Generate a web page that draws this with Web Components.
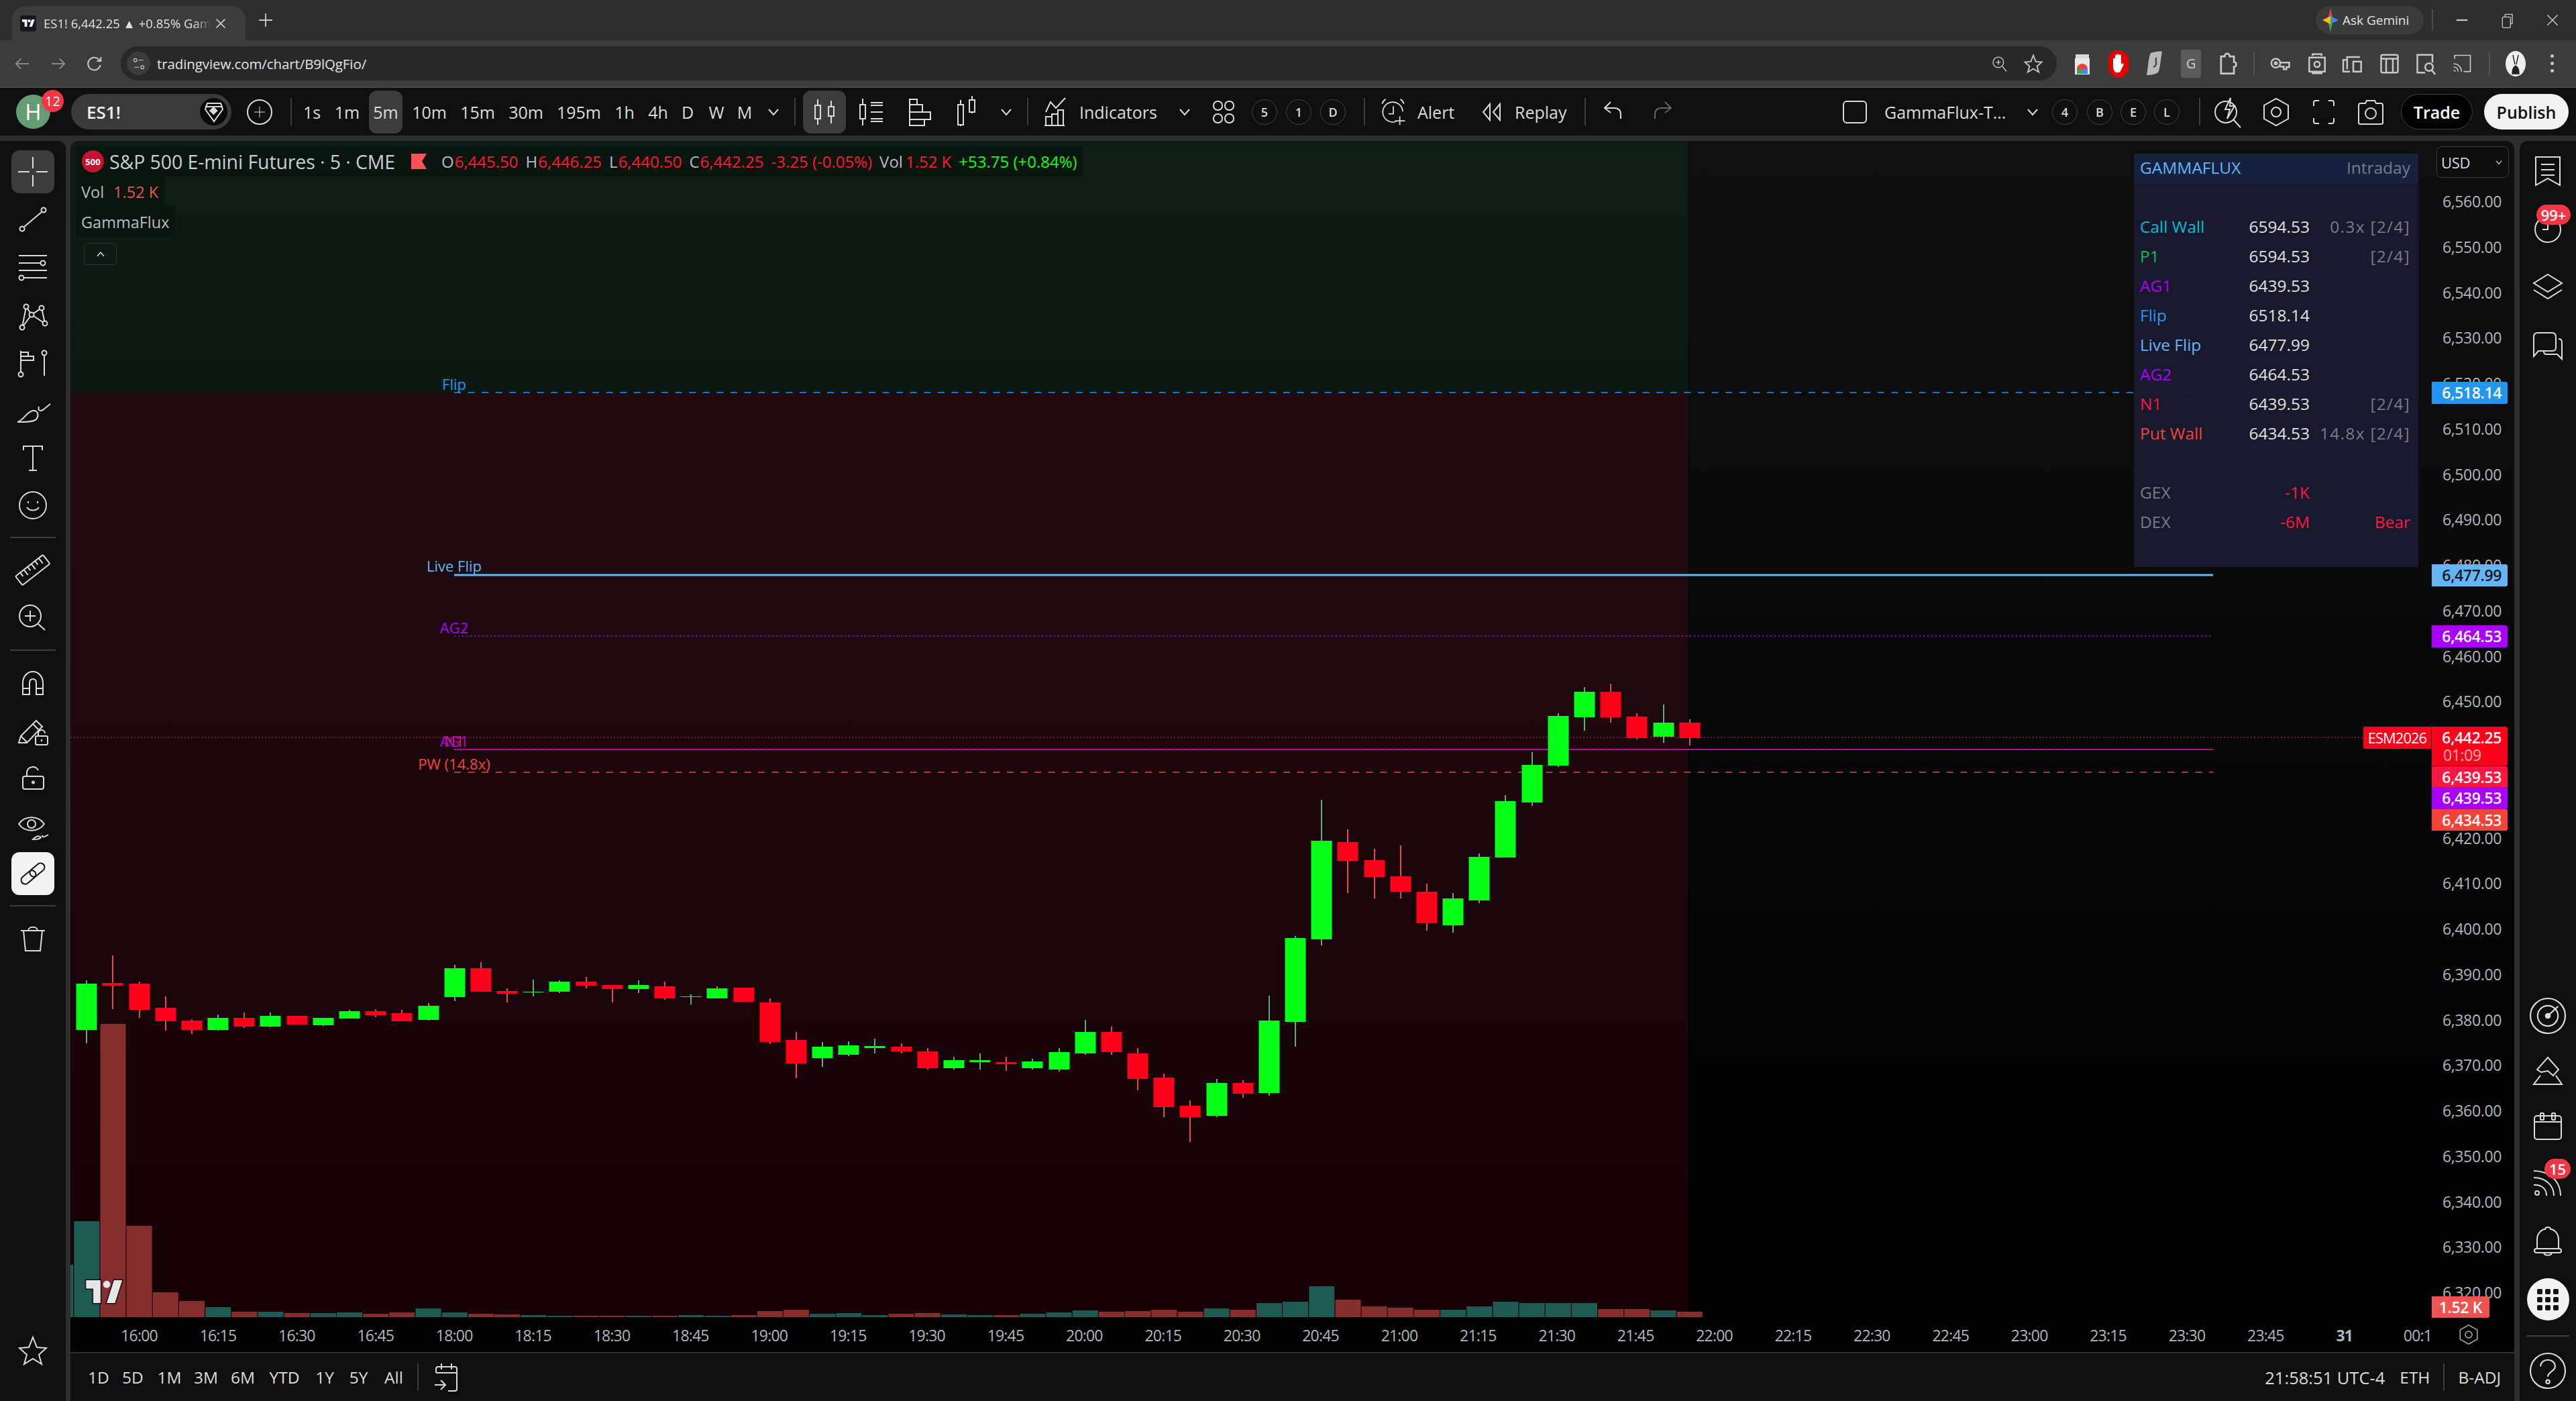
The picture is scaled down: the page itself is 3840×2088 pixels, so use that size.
<!DOCTYPE html>
<html lang="en">
<head>
<meta charset="utf-8">
<title>ES1! 6,442.25 GammaFlux</title>
<style>
  html, body { margin: 0; height: 100%; overflow: hidden; background: #2e2e2e; }
  body { width: 3840px; height: 2088px; display: flex; flex-direction: column; font-family: "Open Sans", sans-serif; }
  .main { display: flex; height: 1878px; margin-top: 8px; }
  .center { width: 3643px; margin: 0 8px 0 7px; display: flex; flex-direction: column; }
</style>
</head>
<body>
<browser-chrome></browser-chrome>
<tv-topbar></tv-topbar>
<div class="main">
  <tv-leftbar></tv-leftbar>
  <div class="center">
    <tv-chart></tv-chart>
    <tv-bottombar></tv-bottombar>
  </div>
  <tv-rightbar></tv-rightbar>
</div>

<script>
const ICONS = {
  crosshair: '<path d="M2 24H19M29 24H46M24 2V19M24 29V46"/>',
  trend: '<path d="M11 35L37 13"/><circle cx="8" cy="38" r="3.5"/><circle cx="40" cy="10" r="3.5"/>',
  fibs: '<path d="M3 7H45M3 18H35M3 29H45M11 40H45"/><circle cx="39" cy="18" r="3.5"/><circle cx="7" cy="40" r="3.5"/>',
  pattern: '<path d="M8 43L14 12L22 24L37 14L42 37L22 24L8 43"/><g fill="#0f0f0f"><circle cx="8" cy="43" r="3.5"/><circle cx="14" cy="12" r="3.5"/><circle cx="22" cy="24" r="3.5"/><circle cx="37" cy="14" r="3.5"/><circle cx="42" cy="37" r="3.5"/></g>',
  flagpin: '<path d="M6 39V7M6 9H17V15H25V21H6"/><path d="M6 15H17"/><circle cx="6" cy="42" r="3.5"/><path d="M41 14V44"/><circle cx="41" cy="10" r="3.5"/>',
  brush: '<path d="M1 42C10 40 14 27 24 25C31 24 34 32 29 38C25 42 12 42 1 42Z"/><path d="M33 19C31 25 35 26 39 24L50 15"/>',
  text: '<path d="M10 13V7H38V13M24 7V43M18 43H30"/>',
  emoji: '<circle cx="24" cy="24" r="20"/><path d="M15 27C19 33 29 33 33 27"/><path d="M17 18V21M31 18V21"/>',
  ruler: '<g transform="rotate(-38 24 24)"><rect x="-2" y="15" width="52" height="17" rx="2"/><path d="M7 15V22M14 15V25M21 15V22M28 15V25M35 15V22M42 15V25"/></g>',
  zoom: '<circle cx="20" cy="21" r="16"/><path d="M20 13V29M12 21H28M32 33L42 42"/>',
  magnet: '<path d="M9 41V24C9 14 16 7 24 7C32 7 39 14 39 24V41H29V24C29 20 27 18 24 18C21 18 19 20 19 24V41Z"/><path d="M9 32H19M29 32H39"/>',
  pencillock: '<path d="M3 42L6 32L29 9L38 18L15 42Z"/><path d="M24 14L33 23M6 32L15 41"/><rect x="28" y="32" width="18" height="13" rx="2" fill="#0f0f0f"/><path d="M32 32V28A5 5 0 0 1 42 28"/><path d="M37 37V40"/>',
  lock: '<rect x="9" y="21" width="31" height="19" rx="3"/><path d="M15 21V15A9 9 0 0 1 32 12"/><circle cx="24.500" cy="30" r="1.500"/>',
  eye: '<path d="M3 21C12 8 32 8 41 21C32 34 12 34 3 21Z"/><circle cx="22" cy="21" r="6"/><path d="M24 44C28 39 33 38 36 41C34 44 30 44 24 44ZM38 38C38 41 41 41 47 37"/>',
  link: '<g transform="rotate(-40 24 24)"><rect x="3" y="18" width="25" height="12" rx="6"/><rect x="20" y="18" width="25" height="12" rx="6"/></g>',
  trash: '<path d="M6 12H42M10 12L13 42H35L38 12M17 12C17 5 31 5 31 12"/>',
  star: '<path d="M24 4L30 19L44 20L33 30L37 44L24 36L11 44L15 30L4 20L18 19Z"/>',
  candles: '<path d="M14 5V14M14 34V43M34 7V16M34 30V41"/><rect x="10" y="14" width="8" height="20"/><rect x="30" y="16" width="8" height="14"/>',
  candlelist: '<path d="M10 4V13M10 34V44"/><rect x="6" y="13" width="8" height="21"/><path d="M22 10H40M22 14H40M22 24H40M22 34H40M22 38H40" />',
  profile: '<path d="M8 5H19V13H8ZM8 13H27V24H8ZM8 24H39V35H8ZM8 35H30V44H8Z"/>',
  pairbars: '<path d="M13 6V13M13 43V45M30 0V6M30 24V26"/><rect x="9" y="13" width="8" height="30"/><rect x="26" y="6" width="8" height="18"/>',
  chevron: '<path d="M17 20L24 28L31 20"/>',
  indicators: '<path d="M8 24L15 9L23 18L37 3"/><path d="M8 44V31H17V44M17 44V27H26V44M26 44V21H34V44M6 44H36"/>',
  layouts: '<rect x="9" y="8" width="13" height="13" rx="6"/><rect x="26" y="8" width="13" height="13" rx="6"/><rect x="9" y="27" width="13" height="13" rx="6"/><rect x="26" y="27" width="13" height="13" rx="6"/>',
  alert: '<path d="M29 40A17 17 0 1 1 40 23"/><path d="M24 14V27H16M5 10C6 6 8 4 11 2M42 10C41 6 39 4 36 2M35 31V46M27 39H44"/>',
  replay: '<path d="M20 12L10 24L20 36ZM35 12L25 24L35 36Z"/>',
  undo: '<path d="M19 9L10 18L19 25M10 18H24C31 18 34 22 34 28V34"/>',
  redo: '<path d="M29 9L38 18L29 25M38 18H24C17 18 14 22 14 28V34"/>',
  square: '<rect x="7" y="8" width="34" height="32" rx="5"/>',
  bolt: '<circle cx="20" cy="24" r="16"/><path d="M31 35L42 47"/><path d="M27 3L19 20H26L22 34L33 15H26Z" fill="#0f0f0f"/>',
  hex: '<path d="M14 6H34L44 24L34 42H14L4 24Z" transform="rotate(90 24 24)"/><circle cx="24" cy="24" r="7"/>',
  fullscreen: '<path d="M9 15V10C9 8 10 7 12 7H17M31 7H36C38 7 39 8 39 10V15M39 33V38C39 40 38 41 36 41H31M17 41H12C10 41 9 40 9 38V33"/>',
  camera: '<path d="M6 14C6 12 7 11 9 11H16L18 7H30L32 11H39C41 11 42 12 42 14V40C42 41 41 42 39 42H9C7 42 6 41 6 40Z"/><circle cx="24" cy="26" r="8"/>',
  watchlist: '<path d="M6 3H42V45L24 35L6 45Z"/><path d="M14 14H34M14 22H34M14 30H34"/>',
  clock: '<path d="M14 10L9 14"/><circle cx="24" cy="26" r="19"/><path d="M24 16V26H16"/>',
  layers: '<path d="M24 6L45 19L24 32L3 19Z"/><path d="M3 29L24 42L45 29"/>',
  chat: '<path d="M3 40V11C3 7 5 5 9 5H30C34 5 36 7 36 11V27C36 31 34 32 30 32H10Z"/><path d="M40 14C43 14 45 16 45 19V44L38 37H22C19 37 18 36 18 33"/>',
  radar: '<circle cx="24" cy="24" r="24"/><circle cx="24" cy="24" r="14"/><circle cx="24" cy="24" r="3" fill="currentColor"/><path d="M24 24L38 11"/>',
  ideas: '<path d="M24 6L40 24L32 33L24 26L14 28L8 24Z"/><path d="M13 33L3 46H45L36 33"/>',
  calendar: '<rect x="4" y="9" width="40" height="35" rx="4"/><path d="M4 18H44"/><rect x="13" y="5" width="5" height="10" rx="1"/><rect x="30" y="5" width="5" height="10" rx="1"/>',
  feed: '<circle cx="8" cy="40" r="3"/><path d="M3 28C15 27 22 34 22 44M3 17C21 17 33 29 33 44M3 7C26 7 43 22 43 44"/>',
  bell: '<path d="M8 36V22C8 13 15 7 20 7C20 3 28 3 28 7C33 7 40 13 40 22V36"/><rect x="4" y="36" width="40" height="6" rx="3"/><path d="M18 42C19 47 29 47 30 42"/>',
  help: '<circle cx="24" cy="24" r="24"/><path d="M14 18C14 6 34 6 34 18C34 25 24 25 24 32"/><circle cx="24" cy="39" r="2.500"/>',
  rangecal: '<path d="M8 17V11C8 9 9 8 11 8H36C38 8 39 9 39 11V41C39 43 38 44 36 44H26M8 17H39M16 3V12M31 3V12M6 35H21M15 28L22 35L15 42"/>',
  back: '<path d="M40 24H9M21 12L9 24L21 36"/>',
  forward: '<path d="M8 24H39M27 12L39 24L27 36"/>',
  reload: '<path d="M37 27A14 14 0 1 1 33 14L38 18M38 9V18H29"/>',
  tune: '<circle cx="15" cy="15" r="4"/><path d="M23 15H35M13 33H25"/><circle cx="33" cy="33" r="4"/>',
  search: '<circle cx="21" cy="21" r="11"/><path d="M30 30L38 40M21 16V26M16 21H26"/>',
  plus: '<path d="M24 8V40M8 24H40"/>',
  close: '<path d="M13 13L35 35M35 13L13 35"/>',
  puzzle: '<path d="M14 12H20C20 6 28 6 28 12H35V21C40 21 40 29 35 29V40H14Z"/>',
  key: '<circle cx="15" cy="23" r="8"/><circle cx="15" cy="23" r="2"/><path d="M23 22H39V30H34V34H29V29H22"/>',
  lens: '<path d="M16 10V7H32V10M10 13H38V38H10ZM16 38V41H32V38"/><circle cx="24" cy="25" r="5"/>',
  devices: '<path d="M13 34V12H36M18 38H6V17H13M24 38V20H38V38Z"/>',
  sidepanel: '<rect x="9" y="8" width="30" height="32" rx="3"/><path d="M9 15H39M18 15V40M30 15V40"/>',
  docsearch: '<path d="M23 40H9V8H36V22"/><circle cx="30" cy="30" r="7"/><path d="M35 36L41 43"/>',
  cast: '<path d="M11 15V9H39V38H27M9 24C17 24 23 30 23 38M9 30C14 30 17 33 17 38M9 36C11 36 12 37 12 38"/>',
  minimize: '<path d="M13 24H35" stroke-width="3"/>',
  restore: '<rect x="14" y="17" width="18" height="24" rx="3"/><path d="M20 17V11H36V32H32"/>'
};

class TvIcon extends HTMLElement {
  constructor() {
    super();
    this.shadowDOM = this.attachShadow({mode: 'open'});
  }
  connectedCallback() {
    const size = this.getAttribute('size') || 48;
    this.shadowDOM.innerHTML = `
      <style>
        :host { display: inline-flex; align-items: center; justify-content: center; flex: none; color: inherit; }
        svg { display: block; overflow: visible; fill: none; stroke: currentColor; stroke-width: ${this.getAttribute('stroke') || 2}; }
      </style>
      <svg viewBox="0 0 48 48" width="${size}" height="${size}">${ICONS[this.getAttribute('name')] || ''}</svg>`;
  }
}
customElements.define('tv-icon', TvIcon);

class RoundBadge extends HTMLElement {
  constructor() {
    super();
    this.shadowDOM = this.attachShadow({mode: 'open'});
    this.shadowDOM.innerHTML = `
      <style>
        :host { display: flex; align-items: center; justify-content: center; position: absolute;
          background: #f23645; color: #fff; font: 600 23px "Open Sans", sans-serif; border-radius: 17px; }
      </style><slot></slot>`;
  }
}
customElements.define('round-badge', RoundBadge);

class BrowserChrome extends HTMLElement {
  constructor() {
    super();
    this.shadowDOM = this.attachShadow({mode: 'open'});
  }
  connectedCallback() {
    this.shadowDOM.innerHTML = `
      <style>
        :host { display: block; height: 131px; color: #c7c7c7; font-family: "Open Sans", sans-serif; }
        .strip { height: 60px; background: #2d2d2d; display: flex; }
        .tab { margin: 9px 0 0 18px; width: 348px; height: 51px; box-sizing: border-box; background: #3c3c3c; border-radius: 20px 20px 0 0;
          display: flex; align-items: center; padding: 0 0 0 12px; position: relative; }
        .fav { width: 24px; height: 24px; background: #131722; border-radius: 4px; display: flex; align-items: center; justify-content: center; flex: none; }
        .title { margin-left: 11px; width: 250px; white-space: nowrap; font-size: 18.500px; color: #e3e3e3;
          -webkit-mask-image: linear-gradient(90deg, #000 90%, transparent); mask-image: linear-gradient(90deg, #000 90%, transparent); }
        .newtab { margin: 12px 0 0 12px; width: 36px; height: 36px; }
        .win { margin-left: auto; display: flex; align-items: center; height: 60px; }
        .gem { width: 161px; height: 42px; margin-top: -1px; border-radius: 21px; background: #3b3b3b; display: flex; align-items: center; box-sizing: border-box;
          padding-left: 10px; gap: 6px; font-size: 19px; color: #e3e3e3; white-space: nowrap; }
        .wsep { width: 2px; height: 32px; background: #4a4a4a; margin: 0 0 0 12px; }
        .wbtn { margin-left: 19px; width: 48px; }
        .bar { height: 69px; background: #3c3c3c; border-bottom: 2px solid #484848; display: flex; align-items: center; padding-left: 6px; }
        .slot { width: 54px; }
        .dim { color: #8a8a8a; }
        .omni { width: 2886px; height: 51px; margin-left: 12px; border-radius: 26px; background: #282828; display: flex; align-items: center; box-sizing: border-box; padding-left: 9px; }
        .site { width: 35px; height: 35px; border-radius: 50%; background: #3c3c3c; display: flex; align-items: center; justify-content: center; }
        .url { margin-left: 10px; font-size: 20.500px; color: #e3e3e3; letter-spacing: -.1px; white-space: nowrap; }
        .ends { margin-left: auto; display: flex; align-items: center; padding-right: 10px; }
        .ends tv-icon { width: 50px; }
        .vsep { width: 2px; height: 34px; background: #555; flex: none; }
        .ext { margin-left: 11px; display: flex; align-items: center; }
        .sq { width: 54px; display: flex; justify-content: center; }
        .dots { display: flex; flex-direction: column; gap: 6px; width: 54px; align-items: center; }
        .dots i { width: 5px; height: 5px; border-radius: 50%; background: #c7c7c7; }
      </style>
      <div class="strip">
        <div class="tab">
          <div class="fav"><svg viewBox="0 0 36 28" width="19"><path fill="#fff" d="M14 24H7V11H0V4h14v20zM28 24h-8l7.500-20h8L28 24z"/><circle fill="#fff" cx="20" cy="8" r="4"/></svg></div>
          <div class="title">ES1! 6,442.25 ▲ +0.85% Gamm</div>
          <tv-icon name="close" size="28" stroke="3"></tv-icon>
        </div>
        <tv-icon class="newtab" name="plus" size="30" stroke="3"></tv-icon>
        <div class="win">
          <div class="gem">
            <svg viewBox="0 0 24 36" width="24" height="36"><path fill="#ea4335" d="M12 0L16 18H8Z"/><path fill="#4285f4" d="M24 18L12 24V12Z"/><path fill="#34a853" d="M12 36L8 18H16Z"/><path fill="#fbbc04" d="M0 18L12 12V24Z"/></svg>
            <span>Ask Gemini</span>
          </div>
          <div class="wsep"></div>
          <tv-icon class="wbtn" name="minimize" size="36" stroke="2"></tv-icon>
          <tv-icon class="wbtn" name="restore" size="32"></tv-icon>
          <tv-icon class="wbtn" name="close" size="34" style="margin-right:11px;margin-left:20px"></tv-icon>
        </div>
      </div>
      <div class="bar">
        <tv-icon class="slot dim" name="back" size="30" stroke="3"></tv-icon>
        <tv-icon class="slot dim" name="forward" size="30" stroke="3"></tv-icon>
        <tv-icon class="slot" name="reload" size="32" stroke="3"></tv-icon>
        <div class="omni">
          <div class="site"><tv-icon name="tune" size="28"></tv-icon></div>
          <div class="url">tradingview.com/chart/B9lQgFio/</div>
          <div class="ends"><tv-icon name="search" size="34"></tv-icon><tv-icon name="star" size="30" stroke="3"></tv-icon></div>
        </div>
        <div class="ext">
          <div class="sq"><svg width="26" height="36" viewBox="0 0 26 36"><path fill="#d8d8d8" d="M3 4h20v6H3z"/><path fill="#e8e8e8" d="M2 10h22v24H2z"/><path fill="#ea4335" d="M5 26a8 8 0 0 1 16 0H5z"/><path fill="#34a853" d="M5 26h8v7H5z"/><path fill="#4285f4" d="M13 26h8v7h-8z"/></svg></div>
          <div class="sq"><svg width="30" height="42" viewBox="0 0 30 42"><path fill="#e60000" d="M9 1h12l9 9v22l-9 9H9l-9-9V10z"/><path fill="#fff" d="M7 14c0-2 3-2 3 0V9c0-2 3-2 3 0v-1c0-2 3-2 3 0v1c0-2 3-2 3 0v13c2-3 5-1 3 2l-5 10H11C8 32 7 28 7 24z"/></svg></div>
          <div class="sq"><svg width="26" height="40" viewBox="0 0 26 40"><path fill="#b8b8b8" d="M7 4c6-2 14-3 17-2-2 10-3 26-6 31-6 4-15 4-17 4 2-10 2-24 6-33z"/><path fill="none" stroke="#333" stroke-width="2" d="M16 11c-3 2 0 6-1 10-1 3-3 4-4 3"/></svg></div>
          <div class="sq"><div style="width:30px;height:42px;background:#5a5a5a;border-radius:3px;display:flex;align-items:center;justify-content:center;font-size:20px;color:#d0d0d0">G</div></div>
          <div class="sq"><tv-icon name="puzzle" size="44" stroke="3"></tv-icon></div>
        </div>
        <div class="vsep" style="margin-left:12px"></div>
        <div class="ext" style="margin-left:12px">
          <div class="sq"><tv-icon name="key" size="40" stroke="3"></tv-icon></div>
          <div class="sq"><tv-icon name="lens" size="40" stroke="3"></tv-icon></div>
          <div class="sq"><tv-icon name="devices" size="40" stroke="3"></tv-icon></div>
          <div class="sq"><tv-icon name="sidepanel" size="40" stroke="3"></tv-icon></div>
          <div class="sq"><tv-icon name="docsearch" size="40" stroke="3"></tv-icon></div>
          <div class="sq"><tv-icon name="cast" size="40" stroke="2"></tv-icon></div>
        </div>
        <div class="vsep" style="margin-left:13px"></div>
        <div class="ext"><div class="sq"><svg width="30" height="38" viewBox="0 0 30 38"><ellipse cx="15" cy="19" rx="15" ry="19" fill="#eee"/><path d="M10 34C10 26 12 24 15 22C18 24 20 26 20 34ZM11 6L14 20M19 6L16 20" fill="#222" stroke="#222" stroke-width="1.500"/></svg></div></div>
        <div class="dots"><i></i><i></i><i></i></div>
      </div>`;
  }
}
customElements.define('browser-chrome', BrowserChrome);

class TvTopbar extends HTMLElement {
  constructor() {
    super();
    this.shadowDOM = this.attachShadow({mode: 'open'});
  }
  connectedCallback() {
    const intervals = [['1s', 48], ['1m', 57], ['5m', 50, 1], ['10m', 80], ['15m', 64], ['30m', 80], ['195m', 78], ['1h', 58], ['4h', 42], ['D', 46], ['W', 40], ['M', 44]];
    const ring = (t, m) => `<span class="ring" style="margin-left:${m}px">${t}</span>`;
    const ico = (n, w, m, extra = '', size = 48) => `<tv-icon name="${n}" size="${size}" style="width:${w}px;margin-left:${m}px;${extra}"></tv-icon>`;
    const sep = (m) => `<i class="sep" style="margin-left:${m}px"></i>`;
    this.shadowDOM.innerHTML = `
      <style>
        :host { display: flex; align-items: center; height: 71px; background: #0f0f0f; color: #dbdbdb; flex: none;
          font: 25px "Open Sans", sans-serif; padding-left: 24px; box-sizing: border-box; position: relative; white-space: nowrap; }
        .ava { width: 51px; height: 51px; border-radius: 50%; background: #649d74; color: #fff; font-size: 33px; display: flex; align-items: center; justify-content: center; flex: none; }
        .search { width: 239px; height: 53px; margin-left: 31px; border-radius: 27px; background: #3a3a3a; display: flex; align-items: center; box-sizing: border-box; padding-left: 23px; color: #f0f0f0; font-weight: 600; font-size: 26px; flex: none; }
        .dia { margin-left: auto; margin-right: 6px; width: 41px; height: 41px; border-radius: 50%; background: #0a0a0a; display: flex; align-items: center; justify-content: center; }
        .add { width: 38px; height: 38px; margin-left: 23px; border: 2px solid #dbdbdb; box-sizing: border-box; border-radius: 50%; display: flex; align-items: center; justify-content: center; flex: none; }
        .sep { width: 2px; height: 41px; background: #3d3d3d; flex: none; }
        .iv { text-align: center; flex: none; height: 64px; line-height: 64px; }
        .on { background: #3c3c3c; border-radius: 12px; }
        .ring { width: 38px; height: 38px; border: 1px solid #444; border-radius: 50%; box-sizing: border-box; display: flex; align-items: center; justify-content: center; font-size: 18px; font-weight: 600; flex: none; }
        .lbl { flex: none; }
        .btn { flex: none; height: 53px; border-radius: 27px; display: flex; align-items: center; justify-content: center; font-weight: 600; }
      </style>
      <div class="ava">H</div>
      <round-badge style="left:62px;top:3px;width:33px;height:33px;font-size:20px;font-weight:400">12</round-badge>
      <div class="search">ES1!<div class="dia"><svg width="28" height="34" viewBox="0 0 28 34" fill="none" stroke="#dbdbdb" stroke-width="2"><path d="M4 4H24L27 13L14 31L1 13Z"/><path d="M1 9H27"/><rect x="9" y="11" width="9" height="9" transform="rotate(45 14 15)" fill="#dbdbdb" stroke="none"/></svg></div></div>
      <div class="add"><tv-icon name="plus" size="24"></tv-icon></div>
      ${sep(27)}
      <span style="width:6px;flex:none"></span>
      ${intervals.map(([t, w, on]) => `<span class="iv${on ? ' on' : ''}" style="width:${w}px${on ? ';margin-left:4px' : ''}">${t}</span>`).join('')}
      ${ico('chevron', 42, 0)}
      ${sep(10)}
      <tv-icon class="on" name="candles" style="width:64px;height:64px;margin-left:11px"></tv-icon>
      ${ico('candlelist', 78, 0)}${ico('profile', 66, 0)}${ico('pairbars', 76, 0)}${ico('chevron', 38, 0)}
      ${sep(12)}
      ${ico('indicators', 50, 17)}
      <span class="lbl" style="margin-left:9px;width:116px">Indicators</span>
      ${ico('chevron', 82, 0)}${ico('layouts', 34, 0)}
      ${ring('5', 25)}${ring('1', 13)}${ring('D', 13)}
      ${sep(27)}
      ${ico('alert', 48, 18, '', 42)}
      <span class="lbl" style="margin-left:12px;width:57px">Alert</span>
      ${ico('replay', 40, 35)}
      <span class="lbl" style="margin-left:13px;width:78px">Replay</span>
      ${sep(26)}
      ${ico('undo', 48, 18)}
      ${ico('redo', 48, 23, 'color:#666')}
      ${ico('square', 34, 247)}
      <span class="lbl" style="margin-left:27px;width:180px">GammaFlux-T...</span>
      ${ico('chevron', 24, 29)}
      ${ring('4', 17)}${ring('B', 14)}${ring('E', 12)}${ring('L', 12)}
      ${sep(29)}
      ${ico('bolt', 48, 18)}${ico('hex', 48, 23)}${ico('fullscreen', 48, 23)}${ico('camera', 48, 22)}
      <span class="btn" style="width:107px;margin-left:21px;background:#000;border:1px solid #444;box-sizing:border-box;color:#fff">Trade</span>
      <span class="btn" style="width:126px;margin-left:17px;background:#f2f2f2;color:#0f0f0f">Publish</span>`;
  }
}
customElements.define('tv-topbar', TvTopbar);

class TvLeftbar extends HTMLElement {
  constructor() {
    super();
    this.shadowDOM = this.attachShadow({mode: 'open'});
  }
  connectedCallback() {
    const item = (n, cls = '') => `<div class="item ${cls}"><span class="box"><tv-icon name="${n}"></tv-icon></span></div>`;
    this.shadowDOM.innerHTML = `
      <style>
        :host { display: flex; flex-direction: column; width: 98px; flex: none; background: #0f0f0f; color: #dbdbdb; border-radius: 0 12px 0 0; padding-top: 10px; box-sizing: border-box; }
        .item { height: 71px; display: flex; align-items: center; justify-content: center; flex: none; }
        .box { width: 64px; height: 64px; border-radius: 12px; display: flex; align-items: center; justify-content: center; }
        .hov .box { background: #3c3c3c; }
        .act .box { background: #f2f2f2; color: #131313; }
        .sep { height: 2px; margin: 12px 15px; background: #3d3d3d; flex: none; }
        .end { margin-top: auto; margin-bottom: 40px; }
      </style>
      ${item('crosshair', 'hov')}${item('trend')}${item('fibs')}${item('pattern')}${item('flagpin')}${item('brush')}${item('text')}${item('emoji')}
      <div class="sep"></div>
      ${item('ruler')}${item('zoom')}
      <div class="sep"></div>
      ${item('magnet')}${item('pencillock')}${item('lock')}${item('eye')}${item('link', 'act')}
      <div class="sep"></div>
      ${item('trash')}
      ${item('star', 'end')}`;
  }
}
customElements.define('tv-leftbar', TvLeftbar);

class TvRightbar extends HTMLElement {
  constructor() {
    super();
    this.shadowDOM = this.attachShadow({mode: 'open'});
  }
  connectedCallback() {
    const item = (n, h, inner = '', size = 48) => `<div class="item" style="height:${h}px"><tv-icon name="${n}" size="${size}"></tv-icon>${inner}</div>`;
    this.shadowDOM.innerHTML = `
      <style>
        :host { display: flex; flex-direction: column; width: 84px; flex: none; background: #0f0f0f; color: #dbdbdb; border-radius: 12px 0 0 0; padding-top: 2px; box-sizing: border-box; }
        .item { height: 85px; display: flex; align-items: center; justify-content: center; flex: none; position: relative; }
        .push { margin-top: auto; }
        .apps { width: 63px; height: 63px; border-radius: 50%; background: #f2f2f2; display: grid; grid-template-columns: repeat(3, 8px); gap: 4px; align-content: center; justify-content: center; }
        .apps i { width: 8px; height: 8px; border-radius: 2px; background: #131313; }
        .sep { height: 2px; margin: 11px 10px 0; background: #3d3d3d; flex: none; }
        .help { height: 96px; padding-top: 6px; box-sizing: border-box; }
      </style>
      ${item('watchlist', 85)}
      ${item('clock', 85, '<round-badge style="left:25px;top:8px;width:51px;height:30px;font-size:22px">99+</round-badge>')}
      ${item('layers', 89)}
      ${item('chat', 87)}
      <div class="push"></div>
      ${item('radar', 75, '', 52)}
      ${item('ideas', 85)}
      ${item('calendar', 84)}
      ${item('feed', 83, '<round-badge style="left:37px;top:7px;width:39px;height:30px;font-size:22px">15</round-badge>')}
      ${item('bell', 91)}
      <div class="item"><div class="apps">${'<i></i>'.repeat(9)}</div></div>
      <div class="sep"></div>
      <div class="item help"><tv-icon name="help" size="52"></tv-icon></div>`;
  }
}
customElements.define('tv-rightbar', TvRightbar);

class TvBottombar extends HTMLElement {
  constructor() {
    super();
    this.shadowDOM = this.attachShadow({mode: 'open'});
  }
  connectedCallback() {
    const ranges = [['1D', 42], ['5D', 60], ['1M', 49], ['3M', 60], ['6M', 50], ['YTD', 74], ['1Y', 46], ['5Y', 55], ['All', 50]];
    this.shadowDOM.innerHTML = `
      <style>
        :host { display: flex; align-items: center; flex: none; height: 73px; box-sizing: border-box; background: #0f0f0f; border-top: 2px solid #2e2e2e; color: #dbdbdb; font: 24.500px "Open Sans", sans-serif; padding: 0 20px 0 21px; white-space: nowrap; }
        span { flex: none; text-align: center; }
        i { width: 2px; height: 41px; background: #3d3d3d; flex: none; }
        .push { margin-left: auto; font-size: 25.500px; }
      </style>
      ${ranges.map(([t, w]) => `<span style="width:${w}px">${t}</span>`).join('')}
      <i style="margin-left:10px"></i>
      <tv-icon name="rangecal" style="margin-left:18px"></tv-icon>
      <span class="push">21:58:51 UTC-4</span>
      <span style="margin-left:22px">ETH</span>
      <i style="margin-left:20px"></i>
      <span style="margin-left:20px">B-ADJ</span>`;
  }
}
customElements.define('tv-bottombar', TvBottombar);

class GammaTable extends HTMLElement {
  constructor() {
    super();
    this.shadowDOM = this.attachShadow({mode: 'open'});
  }
  connectedCallback() {
    const rows = [
      ['Call Wall', '#00bcd4', '6594.53', '0.3x [2/4]'],
      ['P1', '#00c853', '6594.53', '[2/4]'],
      ['AG1', '#aa00ff', '6439.53', ''],
      ['Flip', '#2196f3', '6518.14', ''],
      ['Live Flip', '#64b5f6', '6477.99', ''],
      ['AG2', '#aa00ff', '6464.53', ''],
      ['N1', '#ff1744', '6439.53', '[2/4]'],
      ['Put Wall', '#f44336', '6434.53', '14.8x [2/4]']
    ];
    const row = (r) => `<div class="row"><span style="color:${r[1]}">${r[0]}</span><span class="num" style="color:${r[4] || '#e0e0e0'}">${r[2]}</span><span class="end${r[3].includes('[') ? ' wide' : ''}" style="color:${r[5] || '#787b86'}">${r[3]}</span></div>`;
    this.shadowDOM.innerHTML = `
      <style>
        :host { display: block; position: absolute; right: 20px; top: 19px; width: 424px; height: 616px; background: rgba(26, 26, 46, .97); font: 24.500px "Open Sans", sans-serif; }
        .row { display: grid; grid-template-columns: 143px 110px 150px; height: 44px; box-sizing: border-box; padding: 0 0 3px 9px; align-items: center; white-space: nowrap; }
        .num { text-align: right; }
        .end { text-align: right; }
        .wide { letter-spacing: 1.3px; }
        .head { background: #16213e; color: #64b5f6; grid-template-columns: 253px 150px; }
        .head .end { color: #787b86; }
        .gap { height: 44px; }
      </style>
      <div class="row head"><span>GAMMAFLUX</span><span class="end">Intraday</span></div>
      <div class="gap"></div>
      ${rows.map(row).join('')}
      <div class="gap"></div>
      ${row(['GEX', '#787b86', '-1K', '', '#ff1744'])}
      ${row(['DEX', '#787b86', '-6M', 'Bear', '#ff1744', '#ff1744'])}`;
  }
}
customElements.define('gamma-table', GammaTable);

class ChartLegend extends HTMLElement {
  constructor() {
    super();
    this.shadowDOM = this.attachShadow({mode: 'open'});
    this.shadowDOM.innerHTML = `
      <style>
        :host { display: flex; flex-direction: column; align-items: flex-start; position: absolute; left: 9px; top: 8px; font: 23.500px "Open Sans", sans-serif; color: #b8bbc4; white-space: nowrap; }
        .line { display: flex; align-items: center; height: 45px; background: rgba(0, 0, 0, .22); padding: 0 8px 0 7px; box-sizing: border-box; }
        .logo { width: 33px; height: 33px; border-radius: 50%; background: #c4122f; color: #fff; font: 700 13px "Open Sans", sans-serif; display: flex; align-items: center; justify-content: center; margin: 0 8px 0 1px; }
        .name { width: 428px; color: #c9ccd3; font-size: 28.500px; letter-spacing: -.1px; }
        .flag { margin-left: 22px; width: 23px; height: 23px; background: #ff5252; clip-path: polygon(0 0, 100% 0, 70% 50%, 100% 100%, 0 100%); }
        .ohlc { font-size: 24px; margin-left: 22px; display: flex; }
        .m { margin-left: 11px; }
        .val { margin-left: 1px; }
        .r { color: #ff1a2e; }
        .g { color: #0cff1e; }
        .v { color: #ef5350; margin-left: 14px; }
        .up { margin: 9px 0 0 11px; width: 49px; height: 33px; border: 1px solid #333; border-radius: 6px; box-sizing: border-box; display: flex; align-items: center; justify-content: center; color: #dbdbdb; }
      </style>
      <div class="line">
        <span class="logo">500</span><span class="name">S&amp;P 500 E-mini Futures · 5 · CME</span><span class="flag"></span>
        <span class="ohlc"><span>O</span><span class="r val">6,445.50</span><span class="m">H</span><span class="r val">6,446.25</span><span class="m">L</span><span class="r val">6,440.50</span><span class="m">C</span><span class="r val">6,442.25</span><span class="r m">-3.25 (-0.05%)</span><span class="m">Vol</span><span class="r" style="margin-left:4px">1.52 K</span><span class="g m">+53.75 (+0.84%)</span></span>
      </div>
      <div class="line"><span>Vol</span><span class="v">1.52 K</span></div>
      <div class="line">GammaFlux</div>
      <div class="up"><tv-icon name="chevron" size="34" style="transform:scaleY(-1)"></tv-icon></div>`;
  }
}
customElements.define('chart-legend', ChartLegend);

// body top, body bottom, wick top, wick bottom in page pixels; bar i sits at 129.3 + 39.17 * i
const CANDLES = [
  'g 1466 1535 1461 1555','r 1465 1469 1424 1504','r 1466 1505 1463 1517','r 1502 1522 1485 1536','r 1521 1535 1519 1541',
  'g 1517 1535 1512 1536','r 1517 1530 1509 1532','g 1514 1530 1509 1531','r 1514 1527 1514 1527','g 1517 1528 1517 1529',
  'g 1507 1518 1505 1518','r 1507 1513 1504 1516','r 1510 1522 1505 1522','g 1499 1520 1495 1521','g 1443 1486 1438 1492',
  'r 1443 1478 1434 1478','r 1477 1481 1473 1494','g 1478 1479 1460 1485','g 1463 1478 1461 1480','r 1463 1469 1456 1473',
  'r 1468 1474 1468 1494','g 1468 1474 1461 1480','r 1470 1488 1463 1490','g 1485 1486 1482 1497','g 1473 1488 1470 1488',
  'r 1472 1493 1472 1493','r 1494 1553 1488 1556','r 1550 1585 1538 1607','g 1560 1577 1553 1590','g 1558 1572 1552 1574',
  'g 1559 1562 1548 1570','r 1560 1567 1555 1570','r 1567 1592 1562 1594','g 1580 1592 1575 1594','g 1580 1583 1570 1594',
  'r 1583 1586 1575 1596','g 1582 1592 1578 1594','g 1568 1594 1562 1597','g 1538 1570 1520 1572','r 1538 1568 1530 1572',
  'r 1570 1608 1562 1625','r 1606 1650 1600 1665','r 1648 1665 1640 1702','g 1614 1663 1608 1665','r 1614 1630 1610 1636',
  'g 1521 1629 1484 1633','g 1398 1523 1395 1560','g 1253 1400 1192 1409','r 1255 1283 1236 1331','r 1282 1307 1265 1339',
  'r 1306 1329 1260 1339','r 1329 1376 1317 1387','g 1339 1379 1331 1390','g 1277 1342 1272 1346','g 1194 1278 1185 1278',
  'g 1140 1196 1121 1201','g 1067 1141 1063 1143','g 1031 1069 1024 1089','r 1031 1069 1019 1077','r 1068 1100 1063 1102',
  'g 1077 1098 1050 1107','r 1077 1100 1072 1111'
];
const VOLUMES = [1820,1526,1827,1926,1939,1948,1955,1955,1957,1957,1956,1958,1956,1950,1956,1958,1959,1960,1961,1961,1961,1961,1961,1960,1961,1960,
  1954,1952,1958,1957,1960,1958,1957,1959,1960,1960,1958,1956,1953,1955,1954,1952,1955,1950,1952,1942,1940,1917,1937,1947,1949,1952,1952,1947,1940,1942,1942,1942,1951,1951,1953,1955];
const TIMES = ['16:00','16:15','16:30','16:45','18:00','18:15','18:30','18:45','19:00','19:15','19:30','19:45','20:00','20:15','20:30','20:45','21:00','21:15','21:30','21:45','22:00','22:15','22:30','22:45','23:00','23:15','23:30','23:45','31'];
const PRICE_TAGS = [
  ['6,518.14', '#2196f3', '#fff', 569, 33], ['6,477.99', '#64b5f6', '#131722', 841, 33], ['6,464.53', '#aa00ff', '#fff', 932, 33],
  ['6,439.53', '#ff1744', '#fff', 1142, 32], ['6,439.53', '#aa00ff', '#fff', 1173, 33], ['6,434.53', '#f44336', '#fff', 1206, 32]
];

class TvChart extends HTMLElement {
  constructor() {
    super();
    this.shadowDOM = this.attachShadow({mode: 'open'});
  }
  connectedCallback() {
    const X = (i) => 129.3 + 39.17 * i - 105;
    const Y = (v) => v - 210;
    const hline = (y, c, w, dash, x0 = 572, x1 = 3194) => `<line x1="${x0}" x2="${x1}" y1="${y - 210}" y2="${y - 210}" stroke="${c}" stroke-width="${w}" ${dash ? `stroke-dasharray="${dash}"` : ''}/>`;
    const tag = (t, c, y) => `<text x="572" y="${y - 210}" fill="${c}" text-anchor="middle">${t}</text>`;

    let vols = '<rect x="0" y="1675" width="4" height="78" fill="#1f5a52"/>';
    VOLUMES.forEach((top, i) => {
      const up = CANDLES[i][0] === 'g';
      vols += `<rect x="${(X(i) - 19).toFixed(1)}" y="${Y(top)}" width="38" height="${1963 - top}" fill="${up ? '#1f5a52' : '#862d2d'}"/>`;
    });
    let bars = '';
    CANDLES.forEach((c, i) => {
      const [kind, t, b, wt, wb] = c.split(' ');
      const x = Math.round(X(i));
      bars += `<rect x="${x - 1}" y="${Y(+wt)}" width="2" height="${wb - wt}" fill="${kind === 'g' ? '#62b06c' : '#e24a58'}"/>`;
      bars += `<rect x="${x - 15.5}" y="${Y(+t)}" width="31" height="${b - t}" fill="${kind === 'g' ? '#08ff18' : '#ff001a'}"/>`;
    });
    const prices = [];
    for (let p = 6560, y = 300; p >= 6320; p -= 10, y += 67.75) {
      // 6,440 and 6,430 stay hidden behind the level tags
      if (p === 6440 || p === 6430) continue;
      prices.push(`<span class="p" style="top:${(y - 210 - 17).toFixed(1)}px">${p.toLocaleString('en-US')}.00</span>`);
    }
    const times = TIMES.map((t, k) => `<span class="t${t === '31' ? ' b' : ''}" style="left:${(207.6 + 117.4 * k - 105).toFixed(1)}px">${t}</span>`).join('')
      + `<span class="t" style="left:3499px">00:1</span>`;

    this.shadowDOM.innerHTML = `
      <style>
        :host { display: grid; grid-template-columns: 3520px 123px; grid-template-rows: 1753px 52px; height: 1805px; flex: none; color: #b2b5be; font: 23px "Open Sans", sans-serif; letter-spacing: -.35px;
          background: linear-gradient(#0f0f0f, #000 97%); border-radius: 12px 12px 0 0; overflow: hidden; position: relative; }
        .pane { position: relative; letter-spacing: 0; }
        svg.plot { position: absolute; inset: 0; display: block; font: 22px "Open Sans", sans-serif; }
        .axis { position: relative; }
        .p { position: absolute; right: 19px; height: 34px; line-height: 34px; white-space: nowrap; color: #b2b5be; }
        .usd { position: absolute; right: 8px; top: 8px; width: 108px; height: 47px; box-sizing: border-box; border: 1px solid #3a3a3a; border-radius: 8px; background: #0d0d0d; color: #dbdbdb; display: flex; align-items: center; padding-left: 6px; font-size: 22px; }
        .usd tv-icon { margin-left: auto; }
        .tag { position: absolute; left: 0; width: 113px; box-sizing: border-box; padding-right: 9px; text-align: right; font-weight: 600; border-radius: 0 3px 3px 0; line-height: 33px; white-space: nowrap; }
        .main { background: #ff001a; color: #fff; top: 873px; height: 58px; line-height: 28px; padding-top: 2px; }
        .main div { text-align: left; padding-left: 17px; font-weight: 400; color: #ffb3ba; margin-top: -2px; }
        .sym { position: absolute; left: 3418px; top: 873px; width: 101px; height: 33px; line-height: 33px; background: #ff001a; color: #fff; font-size: 22px; letter-spacing: -1px; text-align: center; border-radius: 3px 0 0 3px; white-space: nowrap; }
        .vol { background: #ef5350; color: #fff; top: 1722px; height: 32px; width: 86px; padding-right: 11px; }
        .time { background: #000; position: relative; overflow: hidden; letter-spacing: -.8px; }
        .t { position: absolute; top: 11px; transform: translateX(-50%); white-space: nowrap; }
        .b { font-weight: 700; }
        .corner { background: #000; display: flex; align-items: center; justify-content: flex-start; padding-left: 38px; color: #b2b5be; }
        .wm { position: absolute; left: 18px; top: 1695px; }
      </style>
      <div class="pane">
        <svg class="plot" width="3520" height="1753" viewBox="0 0 3520 1753">
          <rect x="0" y="0" width="2411" height="375" fill="rgba(0,230,118,.06)"/>
          <rect x="0" y="375" width="2411" height="1378" fill="rgba(255,23,68,.085)"/>
          ${vols}
          ${hline(585, '#2196f3', 1.5, '10 10.6')}
          ${hline(857, '#64b5f6', 3)}
          ${hline(948, '#aa00ff', 1.5, '2 4')}
          ${hline(1099, '#ff1a2e', 1, '2 3', 0, 3418)}
          ${hline(1117, '#aa00ff', 1.5)}
          ${hline(1117, '#ff1744', 1.5, '2 2')}
          ${hline(1151, '#f44336', 1.5, '10 10.6')}
          ${bars}
          ${tag('Flip', '#2196f3', 581)}
          ${tag('Live Flip', '#64b5f6', 852)}
          ${tag('AG2', '#aa00ff', 944)}
          ${tag('N1', '#ff1744', 1113)}
          ${tag('AG1', '#aa00ff', 1113)}
          ${tag('PW (14.8x)', '#f44336', 1147)}
        </svg>
        <svg class="wm" width="66" height="40" viewBox="-1 -1 38 26"><path fill="#e6e6e6" stroke="#111" stroke-width="2" paint-order="stroke" d="M14 23H7V9H0V1h14v22zM28 23h-8l7-22h8L28 23z"/><circle fill="#e6e6e6" cx="20" cy="5" r="3.500"/></svg>
        <chart-legend></chart-legend>
        <gamma-table></gamma-table>
        <div class="sym">ESM2026</div>
      </div>
      <div class="axis">
        ${prices.join('')}
        <div class="usd">USD<tv-icon name="chevron" size="28"></tv-icon></div>
        ${PRICE_TAGS.map(([t, bg, fg, y, h]) => `<div class="tag" style="top:${y - 210}px;height:${h}px;background:${bg};color:${fg}">${t}</div>`).join('')}
        <div class="tag main">6,442.25<div>01:09</div></div>
        <div class="tag vol">1.52 K</div>
      </div>
      <div class="time">${times}</div>
      <div class="corner"><tv-icon name="hex" size="34"></tv-icon></div>`;
  }
}
customElements.define('tv-chart', TvChart);
</script>
</body>
</html>
